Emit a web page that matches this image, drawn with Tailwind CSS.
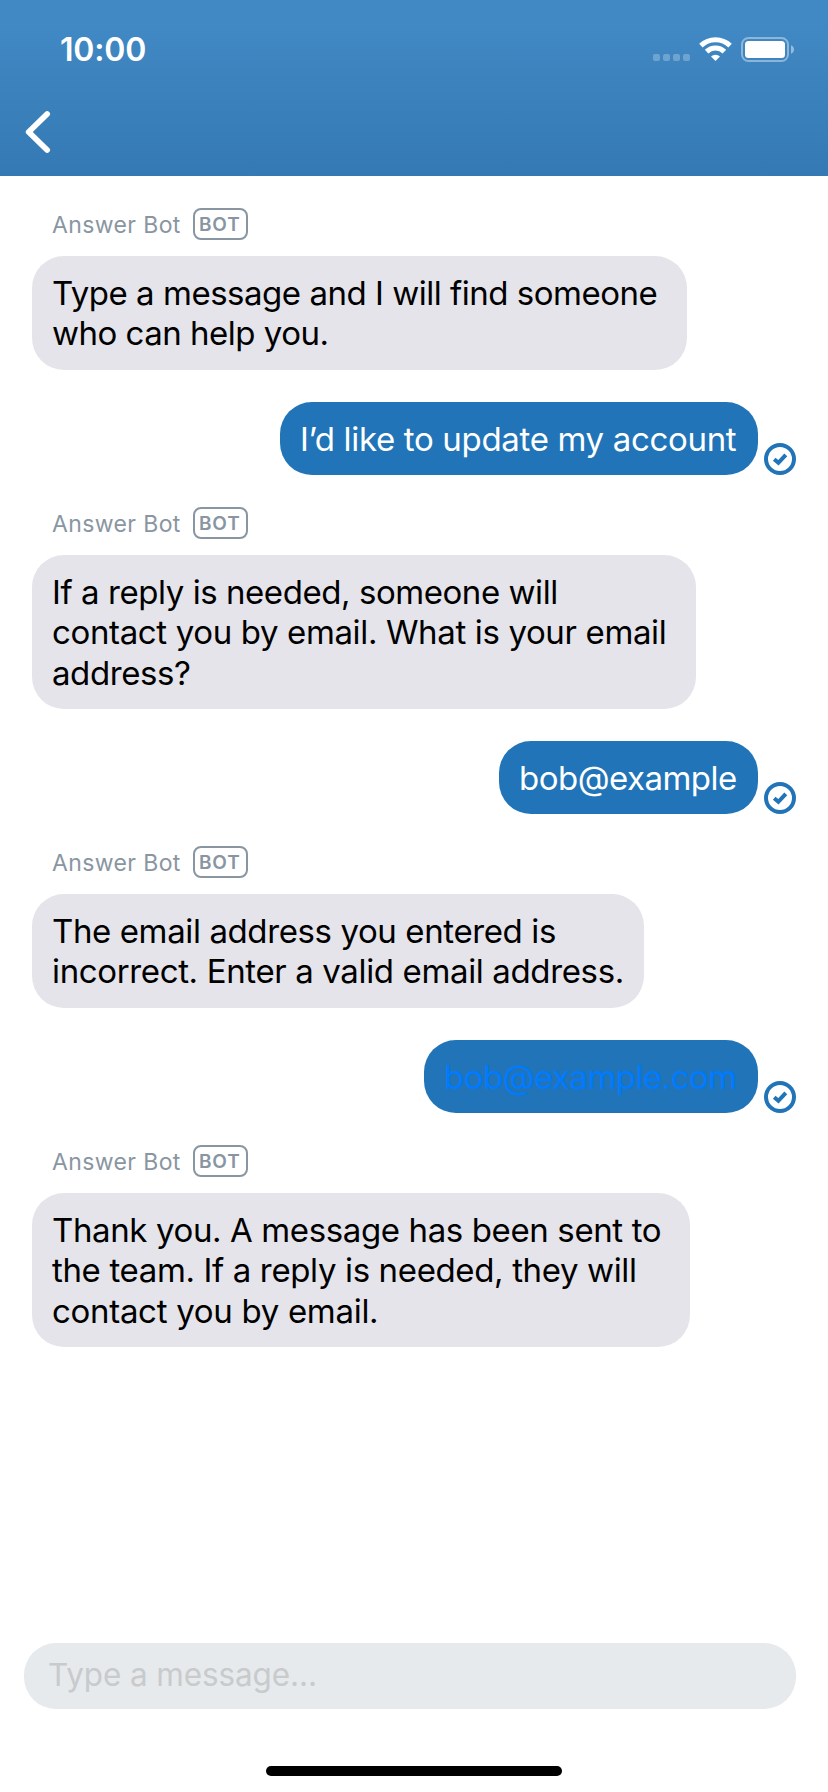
<!DOCTYPE html>
<html lang="en">
<head>
<meta charset="utf-8">
<meta name="viewport" content="width=device-width, initial-scale=1">
<title>Answer Bot</title>
<script src="https://cdn.jsdelivr.net/npm/@tailwindcss/browser@4"></script>
</head>
<body class="bg-white font-['Inter','Liberation_Sans',sans-serif]">
<svg class="hidden">
  <symbol id="sent" viewBox="0 0 32 32">
    <circle cx="16" cy="16" r="14" fill="none" stroke="#2074b7" stroke-width="4"/>
    <path d="M10.2 16.2 14.4 19.8 21.8 11.8" fill="none" stroke="#2074b7" stroke-width="4"/>
  </symbol>
</svg>
<div class="flex h-[1792px] w-[828px] flex-col overflow-hidden bg-white">
  <header class="flex h-44 shrink-0 flex-col bg-linear-to-b from-[#4189c4] from-15% to-[#3479b4]">
    <div class="flex h-[99px] items-center justify-between pr-[34px] pl-[60px]">
      <span class="text-[32px] leading-10 font-semibold tracking-[-0.2px] text-white">10:00</span>
      <div class="flex h-[25px] items-start">
        <div class="mt-[17px] flex gap-[3px]">
          <i class="size-[7px] rounded-[2px] bg-white/25"></i>
          <i class="size-[7px] rounded-[2px] bg-white/25"></i>
          <i class="size-[7px] rounded-[2px] bg-white/25"></i>
          <i class="size-[7px] rounded-[2px] bg-white/25"></i>
        </div>
        <svg class="ml-[9px] h-[25px] w-[33px]" viewBox="0 0 33 25" fill="none" stroke="#fff" stroke-width="5">
          <path d="M1.9 8.6A21.2 21.2 0 0 1 31.1 8.6"/>
          <path d="M7.6 14.6A12.8 12.8 0 0 1 25.4 14.6"/>
          <path d="M12 19.4A6.7 6.7 0 0 1 21 19.4L16.5 24Z" fill="#fff" stroke="none"/>
        </svg>
        <svg class="ml-[9px] h-[25px] w-[53px]" viewBox="0 0 53 25">
          <rect x="1" y="1" width="46" height="23" rx="6.5" fill="none" stroke="#fff" stroke-opacity=".4" stroke-width="2"/>
          <rect x="4" y="4" width="40" height="17" rx="3.5" fill="#fff"/>
          <path d="M50 8.2Q53 9.6 53 12.5T50 16.8Z" fill="#fff" fill-opacity=".45"/>
        </svg>
      </div>
    </div>
    <button class="mt-[9px] ml-6 h-12 w-7" aria-label="Back">
      <svg class="h-12 w-7" viewBox="0 0 28 48" fill="none" stroke="#fff" stroke-width="5.8" stroke-linecap="round" stroke-linejoin="round">
        <path d="M23.1 6 4.7 24 23.1 42"/>
      </svg>
    </button>
  </header>

  <main class="flex flex-1 flex-col gap-8 px-8 pt-8 text-[33px] leading-[40.5px] whitespace-nowrap">
    <section class="flex flex-col items-start gap-4">
      <div class="flex h-8 items-center gap-[11px] pl-5 text-[#8996a2]">
        <span class="w-[130px] pt-px text-[23px] leading-8 tracking-[0.38px]">Answer Bot</span>
        <span class="flex h-8 w-[55px] items-center rounded-[8px] border-2 pt-0.5 pl-1 text-[19px] font-semibold tracking-[0.8px]">BOT</span>
      </div>
      <div class="h-[114px] w-[655px] rounded-[32px] bg-[#e5e4ea] pt-[16.5px] pl-5 text-black">
        <p class="tracking-[-0.48px]">Type a message and I will find someone</p>
        <p class="tracking-[-0.5px]">who can help you.</p>
      </div>
    </section>

    <div class="flex items-end justify-end gap-1.5">
      <p class="h-[73px] w-[478px] rounded-[32px] bg-[#2074b7] pt-[16.5px] pl-5 tracking-[-0.33px] text-white">I’d like to update my account</p>
      <svg class="size-8"><use href="#sent"/></svg>
    </div>

    <section class="flex flex-col items-start gap-4">
      <div class="flex h-8 items-center gap-[11px] pl-5 text-[#8996a2]">
        <span class="w-[130px] pt-px text-[23px] leading-8 tracking-[0.38px]">Answer Bot</span>
        <span class="flex h-8 w-[55px] items-center rounded-[8px] border-2 pt-0.5 pl-1 text-[19px] font-semibold tracking-[0.8px]">BOT</span>
      </div>
      <div class="h-[154px] w-[664px] rounded-[32px] bg-[#e5e4ea] pt-[16.5px] pl-5 text-black">
        <p class="tracking-[-0.44px]">If a reply is needed, someone will</p>
        <p class="tracking-[-0.36px]">contact you by email. What is your email</p>
        <p class="tracking-[-0.41px]">address?</p>
      </div>
    </section>

    <div class="flex items-end justify-end gap-1.5">
      <p class="h-[73px] w-[259px] rounded-[32px] bg-[#2074b7] pt-[16.5px] pl-5 tracking-[-0.52px] text-white">bob@example</p>
      <svg class="size-8"><use href="#sent"/></svg>
    </div>

    <section class="flex flex-col items-start gap-4">
      <div class="flex h-8 items-center gap-[11px] pl-5 text-[#8996a2]">
        <span class="w-[130px] pt-px text-[23px] leading-8 tracking-[0.38px]">Answer Bot</span>
        <span class="flex h-8 w-[55px] items-center rounded-[8px] border-2 pt-0.5 pl-1 text-[19px] font-semibold tracking-[0.8px]">BOT</span>
      </div>
      <div class="h-[114px] w-[612px] rounded-[32px] bg-[#e5e4ea] pt-[16.5px] pl-5 text-black">
        <p class="tracking-[-0.39px]">The email address you entered is</p>
        <p class="tracking-[-0.36px]">incorrect. Enter a valid email address.</p>
      </div>
    </section>

    <div class="flex items-end justify-end gap-1.5">
      <p class="h-[73px] w-[334px] rounded-[32px] bg-[#2074b7] pt-[16.5px] pl-5 tracking-[-0.52px] text-[#007aff]">bob@example.com</p>
      <svg class="size-8"><use href="#sent"/></svg>
    </div>

    <section class="flex flex-col items-start gap-4">
      <div class="flex h-8 items-center gap-[11px] pl-5 text-[#8996a2]">
        <span class="w-[130px] pt-px text-[23px] leading-8 tracking-[0.38px]">Answer Bot</span>
        <span class="flex h-8 w-[55px] items-center rounded-[8px] border-2 pt-0.5 pl-1 text-[19px] font-semibold tracking-[0.8px]">BOT</span>
      </div>
      <div class="h-[154px] w-[658px] rounded-[32px] bg-[#e5e4ea] pt-[16.5px] pl-5 text-black">
        <p class="tracking-[-0.38px]">Thank you. A message has been sent to</p>
        <p class="tracking-[-0.36px]">the team. If a reply is needed, they will</p>
        <p class="tracking-[-0.3px]">contact you by email.</p>
      </div>
    </section>
  </main>

  <footer class="flex shrink-0 flex-col pr-8 pb-4 pl-6">
    <div class="flex h-[66px] items-center rounded-[32px] bg-[#e6eaed] pb-0.5 pl-6">
      <span class="text-[31.5px] leading-10 tracking-[-0.12px] text-[#c9cacc]">Type a message...</span>
    </div>
    <div class="mt-[57px] ml-[242px] h-2.5 w-[296px] rounded-full bg-black"></div>
  </footer>
</div>
</body>
</html>
